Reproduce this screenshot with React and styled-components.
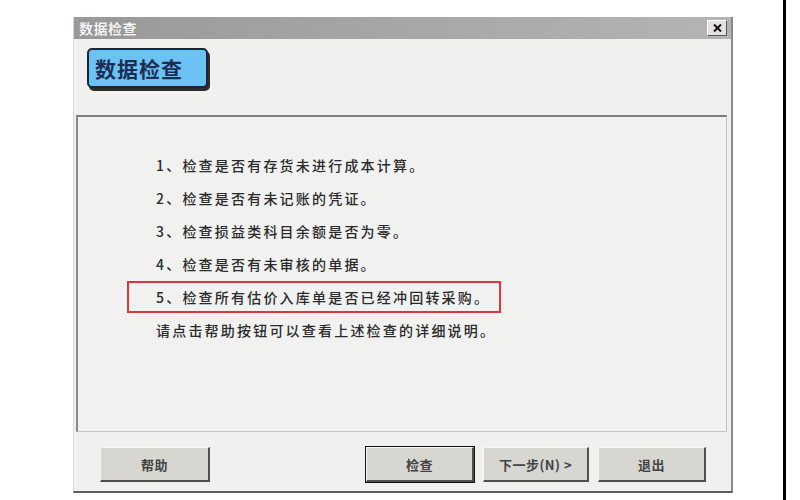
import React from "react"
import styled, { createGlobalStyle } from "styled-components"

const GlobalStyle = createGlobalStyle`
  html, body {
    margin: 0;
    padding: 0;
    background: #ffffff;
  }
  body {
    font-family: "Noto Sans CJK SC", "Liberation Sans", sans-serif;
  }
`

const Page = styled.div`
  display: flex;
  align-items: flex-start;
  width: 800px;
  height: 500px;
  padding-left: 73px;
  box-sizing: border-box;
  overflow: hidden;
`

const Dialog = styled.div`
  margin-top: 17px;
  width: 660px;
  height: 476px;
  box-sizing: border-box;
  display: flex;
  flex-direction: column;
  background: #f0f0ef;
  border-left: 1px solid #d9d9d9;
  border-right: 2px solid #8a8a8a;
  border-bottom: 2px solid #5e5e5e;
`

const EdgeLine = styled.div`
  align-self: stretch;
  width: 3px;
  margin-left: 50px;
  background: #000;
`

const TitleBar = styled.div`
  height: 22px;
  display: flex;
  align-items: center;
  justify-content: space-between;
  padding: 0 4px 0 5px;
  background: linear-gradient(to right, #999999, #a9a9a9 60%, #b4b4b4);
`

const TitleText = styled.span`
  color: #f4f4f4;
  font-size: 14px;
  font-weight: 700;
  letter-spacing: 0.5px;
  text-shadow: 0 0 1px #777;
`

const CloseButton = styled.div`
  width: 20px;
  height: 16px;
  box-sizing: border-box;
  display: flex;
  align-items: center;
  justify-content: center;
  background: #e2e1dd;
  border-top: 1px solid #fff;
  border-left: 1px solid #fff;
  border-right: 1px solid #555;
  border-bottom: 1px solid #555;
`

const HeaderArea = styled.div`
  height: 76px;
  padding: 9px 0 0 13px;
  box-sizing: border-box;
`

const HeaderBadge = styled.div`
  width: 121px;
  height: 40px;
  box-sizing: border-box;
  display: flex;
  align-items: center;
  padding-left: 6px;
  background: #6cc2f3;
  border: 2px solid #1a2535;
  border-radius: 5px;
  box-shadow: 2px 3px 0 #2d2d2d;
  color: #1b2d55;
  font-size: 21px;
  font-weight: 700;
  letter-spacing: 1px;
`

const Panel = styled.div`
  margin-left: 2px;
  width: 651px;
  height: 317px;
  box-sizing: border-box;
  padding: 32px 0 0 78px;
  background: #f1f1f0;
  border-top: 2px solid #7d7d7d;
  border-left: 2px solid #8a8a8a;
  border-right: 1px solid #c4c4c4;
  border-bottom: 1px solid #c4c4c4;
`

const Line = styled.div`
  height: 33px;
  line-height: 33px;
  font-size: 14px;
  letter-spacing: 2.2px;
  color: #2b2b2b;
  font-weight: 500;
  white-space: nowrap;
`

const Highlight = styled.span`
  display: inline-block;
  width: 374px;
  height: 32px;
  line-height: 28px;
  box-sizing: border-box;
  margin-left: -29px;
  padding-left: 27px;
  border: 2px solid #e0343f;
`

const Footer = styled.div`
  flex: 1;
  display: flex;
  align-items: flex-start;
  gap: 9px;
  padding: 15px 25px 0 26px;
`

const Spacer = styled.div`
  flex: 1;
`

const Button = styled.div`
  width: ${(p) => p.$width || 108}px;
  height: 35px;
  box-sizing: border-box;
  display: flex;
  align-items: center;
  justify-content: center;
  background: #d7d6d1;
  border-top: 1px solid #f7f7f7;
  border-left: 1px solid #f7f7f7;
  border-right: 2px solid #505050;
  border-bottom: 2px solid #505050;
  outline: ${(p) => (p.$default ? "1px solid #111" : "none")};
  outline-offset: 0;
  color: #444;
  font-size: 13px;
  font-weight: 700;
  letter-spacing: 0.5px;
`

const checks = [
  "1、检查是否有存货未进行成本计算。",
  "2、检查是否有未记账的凭证。",
  "3、检查损益类科目余额是否为零。",
  "4、检查是否有未审核的单据。",
]

const App = () => (
  <>
    <GlobalStyle />
    <Page>
      <Dialog>
        <TitleBar>
          <TitleText>数据检查</TitleText>
          <CloseButton>
            <svg width="9" height="8" viewBox="0 0 9 8">
              <path d="M1 0.5 L8 7.5 M8 0.5 L1 7.5" stroke="#111" strokeWidth="2" />
            </svg>
          </CloseButton>
        </TitleBar>
        <HeaderArea>
          <HeaderBadge>数据检查</HeaderBadge>
        </HeaderArea>
        <Panel>
          {checks.map((text) => (
            <Line key={text}>{text}</Line>
          ))}
          <Line>
            <Highlight>5、检查所有估价入库单是否已经冲回转采购。</Highlight>
          </Line>
          <Line>请点击帮助按钮可以查看上述检查的详细说明。</Line>
        </Panel>
        <Footer>
          <Button $width={110}>帮助</Button>
          <Spacer />
          <Button $default>检查</Button>
          <Button $width={106}>下一步(N) &gt;</Button>
          <Button>退出</Button>
        </Footer>
      </Dialog>
      <EdgeLine />
    </Page>
  </>
)

export default App
